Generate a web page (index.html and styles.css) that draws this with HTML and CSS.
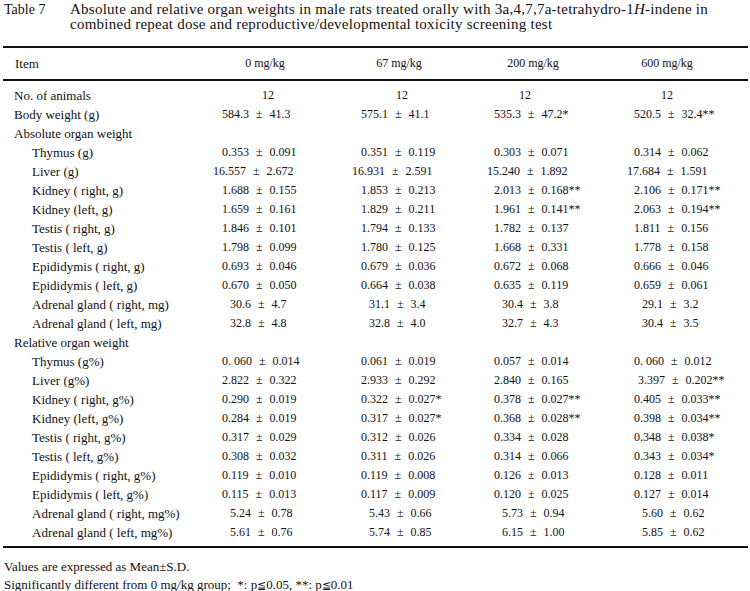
FILE: index.html
```html
<!DOCTYPE html>
<html lang="en">
<head>
<meta charset="utf-8">
<title>Table 7</title>
<link rel="stylesheet" href="styles.css">
</head>
<body>
<div class="caption">
  <div class="cap-no">Table 7</div>
  <div class="cap-text">Absolute and relative organ weights in male rats treated orally with 3a,4,7,7a-tetrahydro-1<i>H</i>-indene in<br>combined repeat dose and reproductive/developmental toxicity screening test</div>
</div>

<div class="table">
  <div class="row head">
    <div class="label">Item</div>
    <div class="hc">0 mg/kg</div>
    <div class="hc">67 mg/kg</div>
    <div class="hc">200 mg/kg</div>
    <div class="hc">600 mg/kg</div>
  </div>
  <div class="body">
    <div class="row">
      <div class="label">No. of animals</div>
      <div class="num c1">12</div><div class="num c2">12</div><div class="num c3">12</div><div class="num c4">12</div>
    </div>
    <div class="row">
      <div class="label">Body weight (g)</div>
      <div class="v">584.3 <span class="pm">±</span> 41.3</div>
      <div class="v">575.1 <span class="pm">±</span> 41.1</div>
      <div class="v">535.3 <span class="pm">±</span> 47.2*</div>
      <div class="v">520.5 <span class="pm">±</span> 32.4**</div>
    </div>
    <div class="row">
      <div class="label">Absolute organ weight</div>
    </div>
    <div class="row">
      <div class="label sub">Thymus (g)</div>
      <div class="v">0.353 <span class="pm">±</span> 0.091</div>
      <div class="v">0.351 <span class="pm">±</span> 0.119</div>
      <div class="v">0.303 <span class="pm">±</span> 0.071</div>
      <div class="v">0.314 <span class="pm">±</span> 0.062</div>
    </div>
    <div class="row">
      <div class="label sub">Liver (g)</div>
      <div class="v wide">16.557 <span class="pm">±</span> 2.672</div>
      <div class="v wide">16.931 <span class="pm">±</span> 2.591</div>
      <div class="v wide">15.240 <span class="pm">±</span> 1.892</div>
      <div class="v wide">17.684 <span class="pm">±</span> 1.591</div>
    </div>
    <div class="row">
      <div class="label sub">Kidney ( right, g)</div>
      <div class="v">1.688 <span class="pm">±</span> 0.155</div>
      <div class="v">1.853 <span class="pm">±</span> 0.213</div>
      <div class="v">2.013 <span class="pm">±</span> 0.168**</div>
      <div class="v">2.106 <span class="pm">±</span> 0.171**</div>
    </div>
    <div class="row">
      <div class="label sub">Kidney (left, g)</div>
      <div class="v">1.659 <span class="pm">±</span> 0.161</div>
      <div class="v">1.829 <span class="pm">±</span> 0.211</div>
      <div class="v">1.961 <span class="pm">±</span> 0.141**</div>
      <div class="v">2.063 <span class="pm">±</span> 0.194**</div>
    </div>
    <div class="row">
      <div class="label sub">Testis ( right, g)</div>
      <div class="v">1.846 <span class="pm">±</span> 0.101</div>
      <div class="v">1.794 <span class="pm">±</span> 0.133</div>
      <div class="v">1.782 <span class="pm">±</span> 0.137</div>
      <div class="v">1.811 <span class="pm">±</span> 0.156</div>
    </div>
    <div class="row">
      <div class="label sub">Testis ( left, g)</div>
      <div class="v">1.798 <span class="pm">±</span> 0.099</div>
      <div class="v">1.780 <span class="pm">±</span> 0.125</div>
      <div class="v">1.668 <span class="pm">±</span> 0.331</div>
      <div class="v">1.778 <span class="pm">±</span> 0.158</div>
    </div>
    <div class="row">
      <div class="label sub">Epididymis ( right, g)</div>
      <div class="v">0.693 <span class="pm">±</span> 0.046</div>
      <div class="v">0.679 <span class="pm">±</span> 0.036</div>
      <div class="v">0.672 <span class="pm">±</span> 0.068</div>
      <div class="v">0.666 <span class="pm">±</span> 0.046</div>
    </div>
    <div class="row">
      <div class="label sub">Epididymis ( left, g)</div>
      <div class="v">0.670 <span class="pm">±</span> 0.050</div>
      <div class="v">0.664 <span class="pm">±</span> 0.038</div>
      <div class="v">0.635 <span class="pm">±</span> 0.119</div>
      <div class="v">0.659 <span class="pm">±</span> 0.061</div>
    </div>
    <div class="row">
      <div class="label sub">Adrenal gland ( right, mg)</div>
      <div class="v narrow">30.6 <span class="pm">±</span> 4.7</div>
      <div class="v narrow">31.1 <span class="pm">±</span> 3.4</div>
      <div class="v narrow">30.4 <span class="pm">±</span> 3.8</div>
      <div class="v narrow">29.1 <span class="pm">±</span> 3.2</div>
    </div>
    <div class="row">
      <div class="label sub">Adrenal gland ( left, mg)</div>
      <div class="v narrow">32.8 <span class="pm">±</span> 4.8</div>
      <div class="v narrow">32.8 <span class="pm">±</span> 4.0</div>
      <div class="v narrow">32.7 <span class="pm">±</span> 4.3</div>
      <div class="v narrow">30.4 <span class="pm">±</span> 3.5</div>
    </div>
    <div class="row">
      <div class="label">Relative organ weight</div>
    </div>
    <div class="row">
      <div class="label sub">Thymus (g%)</div>
      <div class="v">0. 060 <span class="pm">±</span> 0.014</div>
      <div class="v">0.061 <span class="pm">±</span> 0.019</div>
      <div class="v">0.057 <span class="pm">±</span> 0.014</div>
      <div class="v">0. 060 <span class="pm">±</span> 0.012</div>
    </div>
    <div class="row">
      <div class="label sub">Liver (g%)</div>
      <div class="v">2.822 <span class="pm">±</span> 0.322</div>
      <div class="v">2.933 <span class="pm">±</span> 0.292</div>
      <div class="v">2.840 <span class="pm">±</span> 0.165</div>
      <div class="v nudge">3.397 <span class="pm">±</span> 0.202**</div>
    </div>
    <div class="row">
      <div class="label sub">Kidney ( right, g%)</div>
      <div class="v">0.290 <span class="pm">±</span> 0.019</div>
      <div class="v">0.322 <span class="pm">±</span> 0.027*</div>
      <div class="v">0.378 <span class="pm">±</span> 0.027**</div>
      <div class="v">0.405 <span class="pm">±</span> 0.033**</div>
    </div>
    <div class="row">
      <div class="label sub">Kidney (left, g%)</div>
      <div class="v">0.284 <span class="pm">±</span> 0.019</div>
      <div class="v">0.317 <span class="pm">±</span> 0.027*</div>
      <div class="v">0.368 <span class="pm">±</span> 0.028**</div>
      <div class="v">0.398 <span class="pm">±</span> 0.034**</div>
    </div>
    <div class="row">
      <div class="label sub">Testis ( right, g%)</div>
      <div class="v">0.317 <span class="pm">±</span> 0.029</div>
      <div class="v">0.312 <span class="pm">±</span> 0.026</div>
      <div class="v">0.334 <span class="pm">±</span> 0.028</div>
      <div class="v">0.348 <span class="pm">±</span> 0.038*</div>
    </div>
    <div class="row">
      <div class="label sub">Testis ( left, g%)</div>
      <div class="v">0.308 <span class="pm">±</span> 0.032</div>
      <div class="v">0.311 <span class="pm">±</span> 0.026</div>
      <div class="v">0.314 <span class="pm">±</span> 0.066</div>
      <div class="v">0.343 <span class="pm">±</span> 0.034*</div>
    </div>
    <div class="row">
      <div class="label sub">Epididymis ( right, g%)</div>
      <div class="v">0.119 <span class="pm">±</span> 0.010</div>
      <div class="v">0.119 <span class="pm">±</span> 0.008</div>
      <div class="v">0.126 <span class="pm">±</span> 0.013</div>
      <div class="v">0.128 <span class="pm">±</span> 0.011</div>
    </div>
    <div class="row">
      <div class="label sub">Epididymis ( left, g%)</div>
      <div class="v">0.115 <span class="pm">±</span> 0.013</div>
      <div class="v">0.117 <span class="pm">±</span> 0.009</div>
      <div class="v">0.120 <span class="pm">±</span> 0.025</div>
      <div class="v">0.127 <span class="pm">±</span> 0.014</div>
    </div>
    <div class="row">
      <div class="label sub">Adrenal gland ( right, mg%)</div>
      <div class="v narrow">5.24 <span class="pm">±</span> 0.78</div>
      <div class="v narrow">5.43 <span class="pm">±</span> 0.66</div>
      <div class="v narrow">5.73 <span class="pm">±</span> 0.94</div>
      <div class="v narrow">5.60 <span class="pm">±</span> 0.62</div>
    </div>
    <div class="row">
      <div class="label sub">Adrenal gland ( left, mg%)</div>
      <div class="v narrow">5.61 <span class="pm">±</span> 0.76</div>
      <div class="v narrow">5.74 <span class="pm">±</span> 0.85</div>
      <div class="v narrow">6.15 <span class="pm">±</span> 1.00</div>
      <div class="v narrow">5.85 <span class="pm">±</span> 0.62</div>
    </div>
  </div>
</div>

<div class="notes">
  <p>Values are expressed as Mean±S.D.</p>
  <p>Significantly different from 0 mg/kg group;&nbsp; *: p<span class="le">≦</span>0.05, **: p<span class="le">≦</span>0.01</p>
</div>
</body>
</html>
```

FILE: styles.css
```css
html, body {
  margin: 0;
  padding: 0;
  background: #fff;
}

body {
  color: #111;
  font-family: "Liberation Serif", "DejaVu Serif", "Noto Sans CJK JP", serif;
  font-size: 13px;
  line-height: 15px;
  padding-top: 2px;
  width: 750px;
}

.caption {
  display: flex;
  padding-left: 4px;
}

.cap-no {
  width: 66px;
  flex: none;
  font-size: 14px;
}

.cap-text {
  flex: 1;
  font-size: 15px;
  letter-spacing: 0.25px;
  white-space: nowrap;
}

.table {
  margin: 14px 2px 0 3px;
  border-top: 2px solid #111;
  border-bottom: 2px solid #111;
}

.row {
  display: grid;
  grid-template-columns: 195px 134px 134px 134px 134px;
  height: 19px;
  line-height: 19px;
  white-space: nowrap;
}

.row.head {
  height: 31px;
  line-height: 31px;
  border-bottom: 2px solid #111;
  font-size: 12px;
}

.head .label {
  font-size: 13px;
  padding-left: 12px;
}

.hc {
  text-align: center;
}

.body {
  padding: 5px 0 4px;
}

.label {
  padding-left: 11px;
}

.label.sub {
  padding-left: 29px;
}

.num {
  font-size: 12px;
  text-align: center;
}

.num.c1 { padding-left: 6px; }
.num.c2 { padding-left: 6px; }
.num.c3 { padding-right: 16px; }

.v {
  font-size: 12px;
}

.v:nth-child(2) { padding-left: 24px; }
.v:nth-child(3) { padding-left: 29px; }
.v:nth-child(4) { padding-left: 28px; }
.v:nth-child(5) { padding-left: 34px; }

.v.wide:nth-child(2) { padding-left: 15px; }
.v.wide:nth-child(3) { padding-left: 20px; }
.v.wide:nth-child(4) { padding-left: 21px; }
.v.wide:nth-child(5) { padding-left: 27px; }

.v.narrow:nth-child(2) { padding-left: 32px; }
.v.narrow:nth-child(3) { padding-left: 37px; }
.v.narrow:nth-child(4) { padding-left: 36px; }
.v.narrow:nth-child(5) { padding-left: 42px; }

.v.nudge:nth-child(5) { padding-left: 38px; }

.pm {
  margin: 0 4px;
}

.notes {
  padding-left: 4px;
  margin-top: 10px;
}

.notes p {
  margin: 0;
  line-height: 18px;
}

.le {
  font-family: "DejaVu Serif", serif;
  font-size: 11px;
}
```
